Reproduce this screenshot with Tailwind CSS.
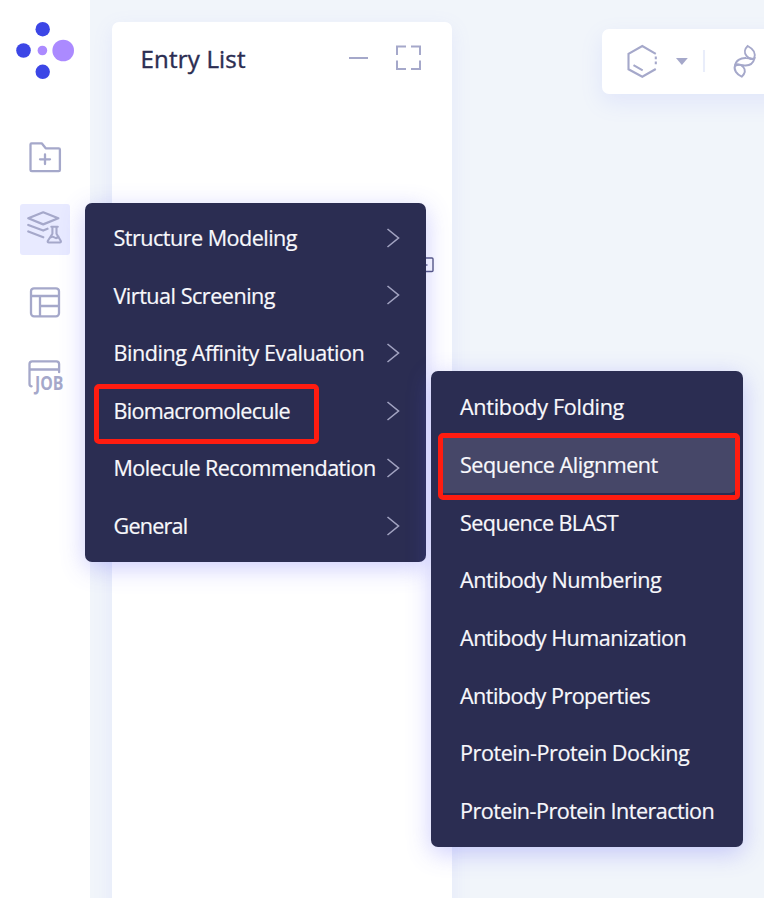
<!DOCTYPE html>
<html lang="en">
<head>
  <meta charset="UTF-8" />
  <meta name="viewport" content="width=device-width, initial-scale=1.0" />
  <title>Entry List</title>
  <script src="https://cdn.jsdelivr.net/npm/@tailwindcss/browser@4"></script>
</head>

<body class="relative flex h-[898px] w-[764px] overflow-hidden bg-[#f1f5fa] font-['Open_Sans','Noto_Sans',sans-serif] text-[#2b2d52]">
  <!-- icon rail -->
  <aside class="flex w-[90px] shrink-0 flex-col items-center bg-white pt-[20px] text-[#a5a8ca]">
    <svg class="h-[60px] w-[60px]" viewBox="15 20 60 60">
      <circle cx="42.7" cy="29.2" r="7.2" fill="#3c46e6" />
      <circle cx="23.5" cy="50.5" r="7.3" fill="#3c46e6" />
      <circle cx="42.7" cy="71.8" r="7.2" fill="#3c46e6" />
      <circle cx="42.4" cy="50.5" r="4.8" fill="#ab8aff" />
      <circle cx="63.2" cy="50.5" r="10.8" fill="#ab8aff" />
    </svg>
    <nav class="mt-[52px] flex flex-col items-center">
      <!-- new project -->
      <a href="#" class="flex h-[50px] w-[50px] items-center justify-center">
        <svg class="h-[50px] w-[50px]" viewBox="20 132 50 50" fill="none" stroke="currentColor" stroke-width="2.3" stroke-linejoin="round" stroke-linecap="round">
          <path d="M31.5 143.3h10.2l4 5h13q1.2 0 1.2 1.2v20.4q0 1.2-1.2 1.2H31.8q-1.3 0-1.3-1.2v-25.4q0-1.2 1-1.2z" />
          <path d="M45 154.500v9.600M40 159.300h10" />
        </svg>
      </a>
      <!-- modules -->
      <a href="#" class="mt-[22px] flex h-[51px] w-[50px] items-center justify-center rounded-[3px] bg-[#e8eaff]">
        <svg class="h-[51px] w-[50px]" viewBox="20 204 50 51" fill="none" stroke="currentColor" stroke-width="2.3" stroke-linejoin="round" stroke-linecap="round">
          <path d="M28.300 218.300L43.200 212.300 58.300 218.300 43.200 224.400z" />
          <path d="M28.300 225L43.200 230.500 47.500 228.800M28.300 231.500L43.300 237.200" />
          <path d="M51.300 226.800h6.500M52.400 227v6.800l-4.500 7q-.8 1.700 1 1.700h10.800q1.800 0 1-1.700l-4.200-7V227M50.500 237.500q2-1.500 4 0t4-1" stroke-width="2.1" />
        </svg>
      </a>
      <!-- layout -->
      <a href="#" class="mt-[22px] flex h-[50px] w-[50px] items-center justify-center">
        <svg class="h-[50px] w-[50px]" viewBox="20 277 50 50" fill="none" stroke="currentColor" stroke-width="2.3">
          <rect x="31" y="288.300" width="28" height="28" rx="3" />
          <path d="M31 296h28M40 296v20M40 306h19" />
        </svg>
      </a>
      <!-- jobs -->
      <a href="#" class="mt-[23px] flex h-[50px] w-[50px] items-center justify-center">
        <svg class="h-[50px] w-[50px]" viewBox="20 350 50 50" fill="none" stroke="currentColor" stroke-width="2.3" stroke-linecap="round">
          <path d="M31.600 386.300q-2.100 0-2.100-2.300v-20q0-2.700 2.700-2.700h24.200q2.700 0 2.700 2.700v8.200M30 369.500h29" />
          <text x="35" y="389.700" textLength="28.500" lengthAdjust="spacingAndGlyphs" class="fill-current stroke-none font-['Open_Sans'] text-[19px] font-bold">JOB</text>
        </svg>
      </a>
    </nav>
  </aside>

  <!-- entry list panel -->
  <section class="ml-[22px] mt-[22px] h-[900px] w-[340px] shrink-0 rounded-[7px] bg-white shadow-[0_6px_20px_rgba(130,140,255,0.12)]">
    <header class="flex h-[72px] items-center pl-[28.500px] pr-[31px]">
      <h1 class="pt-[1px] text-[24px] font-normal leading-[34px] tracking-[0.2px] [-webkit-text-stroke:0.4px_#2b2d52]">Entry List</h1>
      <div class="ml-auto flex items-center gap-[28px] text-[#a5a8ca]">
        <span class="h-[2px] w-[19px] bg-current"></span>
        <svg class="h-[26px] w-[25px]" viewBox="0 0 25 26" fill="none" stroke="currentColor" stroke-width="2">
          <path d="M1 10V1.500h9M15 1.500h9V10M24 15.500V24h-9M10 24H1v-8.500" />
        </svg>
      </div>
    </header>
  </section>

  <!-- toolbar -->
  <div class="ml-[150px] mt-[29px] flex h-[65px] w-[200px] shrink-0 items-center rounded-[7px] bg-white shadow-[0_8px_22px_rgba(130,140,255,0.14)]">
    <svg class="h-[65px] w-[162px]" viewBox="602 29 162 65" fill="none" stroke="#a5a8ca" stroke-width="2.1">
      <path d="M655.800 53.800L642.300 46 628.500 53.800v15.500l13.800 7.400 13.500-7.700M633.500 65.200l9.200 5.200M655.800 56.500v2.800M655.800 61.500v2.800" />
      <path d="M676 58h11.800l-5.900 7z" fill="#a5a8ca" stroke="none" />
      <path d="M704 50v22" stroke="#e9edfa" />
      <!-- helix: upper loop, middle loop, lower loop -->
      <path d="M747.700 46C744.500 49 744 53 746.500 55.800C748.500 58.300 751.500 59.500 754 58.800C756.500 53 752.500 48.500 747.700 46z" stroke-width="1.900" />
      <path d="M735 66C735.500 60.500 740.500 57.800 746 58C749 58 752 59.300 754.500 58.500C753 64 748.500 66 743.500 65.300C740 64.500 737.500 64.500 735 66z" stroke-width="1.900" />
      <path d="M741.700 76.700C745 73.500 745.800 70 743.300 67C741 64.500 738 63.800 735.300 64.800C733 70 737 74.500 741.700 76.700z" stroke-width="1.900" />
    </svg>
  </div>

  <!-- sliver of the collapse button beside the module menu -->
  <svg class="absolute left-[415px] top-[257px] h-[16px] w-[19px]" viewBox="0 0 19 16" fill="none" stroke="#55577e" stroke-width="1.400">
    <rect x="4" y="1" width="14" height="13.500" rx="1" />
    <path d="M7 8h5.500" />
  </svg>

  <!-- module menu -->
  <ul class="absolute left-[85px] top-[202.500px] w-[341px] rounded-[7px] bg-[#2b2d52] py-[7px] text-[21.600px] text-[#f8f8fc] shadow-[0_6px_24px_rgba(90,90,250,0.3)] [-webkit-text-stroke:0.2px_#f8f8fc]">
    <li class="flex h-[57.600px] items-center justify-between pl-[28.500px] pr-[26px]">
      <span class="whitespace-nowrap tracking-[-0.53px]">Structure Modeling</span>
      <svg class="mb-[1px] h-[20px] w-[14px] shrink-0" viewBox="0 0 14 20" fill="none" stroke="#a2a3c1" stroke-width="1.600"><path d="M1.500 1l11 9-11 9" /></svg>
    </li>
    <li class="flex h-[57.600px] items-center justify-between pl-[28.500px] pr-[26px]">
      <span class="whitespace-nowrap tracking-[-0.5px]">Virtual Screening</span>
      <svg class="mb-[1px] h-[20px] w-[14px] shrink-0" viewBox="0 0 14 20" fill="none" stroke="#a2a3c1" stroke-width="1.600"><path d="M1.500 1l11 9-11 9" /></svg>
    </li>
    <li class="flex h-[57.600px] items-center justify-between pl-[28.500px] pr-[26px]">
      <span class="whitespace-nowrap tracking-[-0.46px]">Binding Affinity Evaluation</span>
      <svg class="mb-[1px] h-[20px] w-[14px] shrink-0" viewBox="0 0 14 20" fill="none" stroke="#a2a3c1" stroke-width="1.600"><path d="M1.500 1l11 9-11 9" /></svg>
    </li>
    <li class="flex h-[57.600px] items-center justify-between pl-[28.500px] pr-[26px]">
      <span class="whitespace-nowrap tracking-[-0.74px]">Biomacromolecule</span>
      <svg class="mb-[1px] h-[20px] w-[14px] shrink-0" viewBox="0 0 14 20" fill="none" stroke="#a2a3c1" stroke-width="1.600"><path d="M1.500 1l11 9-11 9" /></svg>
    </li>
    <li class="flex h-[57.600px] items-center justify-between pl-[28.500px] pr-[26px]">
      <span class="whitespace-nowrap tracking-[-0.58px]">Molecule Recommendation</span>
      <svg class="mb-[1px] h-[20px] w-[14px] shrink-0" viewBox="0 0 14 20" fill="none" stroke="#a2a3c1" stroke-width="1.600"><path d="M1.500 1l11 9-11 9" /></svg>
    </li>
    <li class="flex h-[57.600px] items-center justify-between pl-[28.500px] pr-[26px]">
      <span class="whitespace-nowrap tracking-[-0.8px]">General</span>
      <svg class="mb-[1px] h-[20px] w-[14px] shrink-0" viewBox="0 0 14 20" fill="none" stroke="#a2a3c1" stroke-width="1.600"><path d="M1.500 1l11 9-11 9" /></svg>
    </li>
  </ul>

  <!-- biomacromolecule submenu -->
  <ul class="absolute left-[431px] top-[371px] w-[312px] whitespace-nowrap rounded-[7px] bg-[#2b2d52] px-[7px] pb-[7.200px] pt-[7px] text-[21.600px] text-[#f8f8fc] shadow-[0_6px_24px_rgba(90,90,250,0.3)] [-webkit-text-stroke:0.2px_#f8f8fc]">
    <li class="flex h-[57.700px] items-center pl-[22px]"><span class="tracking-[-0.32px]">Antibody Folding</span></li>
    <li class="flex h-[57.700px] items-center rounded-[6px] bg-[#464768] pl-[22px] pt-[1px]"><span class="tracking-[-0.48px]">Sequence Alignment</span></li>
    <li class="flex h-[57.700px] items-center pl-[22px] pt-[1px]"><span class="tracking-[-0.6px]">Sequence BLAST</span></li>
    <li class="flex h-[57.700px] items-center pl-[22px] pt-[1px]"><span class="tracking-[-0.48px]">Antibody Numbering</span></li>
    <li class="flex h-[57.700px] items-center pl-[22px] pt-[1px]"><span class="tracking-[-0.52px]">Antibody Humanization</span></li>
    <li class="flex h-[57.700px] items-center pl-[22px] pt-[1px]"><span class="tracking-[-0.55px]">Antibody Properties</span></li>
    <li class="flex h-[57.700px] items-center pl-[22px] pt-[1px]"><span class="tracking-[-0.46px]">Protein-Protein Docking</span></li>
    <li class="flex h-[57.700px] items-center pl-[22px] pt-[1px]"><span class="tracking-[-0.54px]">Protein-Protein Interaction</span></li>
  </ul>

  <!-- highlight frames -->
  <div class="absolute left-[94px] top-[384px] h-[60px] w-[225px] rounded-[5px] border-[5px] border-[#ff1c10]"></div>
  <div class="absolute left-[438px] top-[433px] h-[67px] w-[302px] rounded-[5px] border-[5px] border-[#ff1c10]"></div>
</body>
</html>
